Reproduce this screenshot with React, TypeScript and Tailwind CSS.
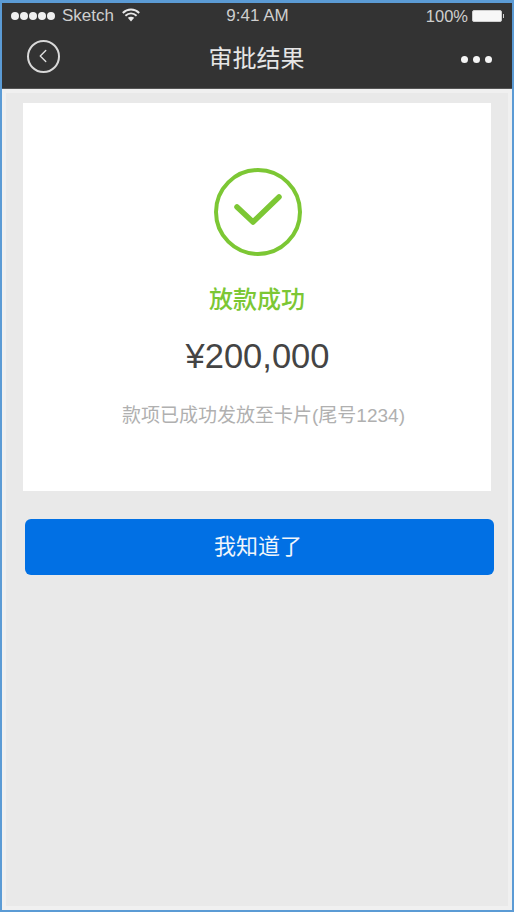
import { ChevronLeft } from "lucide-react";

const font = { sans: "font-['Liberation_Sans','Noto_Sans_CJK_SC',sans-serif]" };

function StatusBar() {
  return (
    <div className="flex h-[26px] items-center justify-between pl-[9px] pr-[8px] text-[17px] text-[#cfcfcf]">
      <div className="flex w-[170px] items-center">
        <div className="flex gap-[1px]">
          {[0, 1, 2, 3, 4].map((i) => (
            <span key={i} className="h-[8px] w-[8px] rounded-full bg-[#efefef]" />
          ))}
        </div>
        <span className="ml-[7px]">Sketch</span>
        <svg className="mb-[2px] ml-[8px]" width="18" height="14" viewBox="0 0 18 14" fill="none">
          <path d="M.8 5C5.5 .4 12.5 .4 17.2 5" stroke="#e8e8e8" strokeWidth="1.9" />
          <path d="M3.4 7.7C6.8 4.6 11.2 4.6 14.6 7.7" stroke="#e8e8e8" strokeWidth="1.9" />
          <path d="M5.8 9.8C7.6 8.4 10.4 8.4 12.2 9.8L9 13.5Z" fill="#e8e8e8" />
        </svg>
      </div>
      <span>9:41 AM</span>
      <div className="flex w-[170px] items-center justify-end">
        <span className="text-[16.5px]">100%</span>
        <div className="ml-[4px] h-[12px] w-[30px] rounded-[2px] border border-[#cfcfcf] bg-[#f7f7f7]" />
        <div className="ml-[1px] h-[4px] w-[1px] bg-[#cfcfcf]" />
      </div>
    </div>
  );
}

function NavBar() {
  return (
    <div className="flex h-[60px] items-center justify-between pb-[6px] pl-[25px] pr-[20px]">
      <div className="flex h-[33px] w-[33px] items-center justify-center rounded-full border-2 border-[#d9d9d9]">
        <ChevronLeft size={22} strokeWidth={1.5} className="mr-[2px] text-[#e0e0e0]" />
      </div>
      <div className="mr-[8px] mt-[6px] text-[24px] leading-[32px] text-[#e6e6e6]">审批结果</div>
      <div className="mt-[6px] flex gap-[5px]">
        {[0, 1, 2].map((i) => (
          <span key={i} className="h-[7px] w-[7px] rounded-full bg-[#f5f5f5]" />
        ))}
      </div>
    </div>
  );
}

function SuccessIcon() {
  return (
    <svg width="88" height="88" viewBox="0 0 88 88" fill="none">
      <circle cx="44" cy="44" r="42" stroke="#7cc734" strokeWidth="4" />
      <path d="M23 39L39 54L65 29" stroke="#7cc734" strokeWidth="5.5" strokeLinecap="round" strokeLinejoin="round" />
    </svg>
  );
}

export default function App() {
  return (
    <div className={`flex h-[912px] w-[514px] flex-col overflow-hidden border-x-2 border-b-2 border-t-[3px] border-[#5b9bd5] bg-[#e9e9e9] ${font.sans}`}>
      <div className="h-[86px] shrink-0 border-b border-[#555] bg-[#333333]">
        <StatusBar />
        <NavBar />
      </div>

      <div className="flex flex-1 flex-col border-[4px] border-[#f0f0f0] pl-[17px] pr-[15px] pt-[10px]">
        <div className="flex h-[388px] w-[468px] flex-col items-center bg-white pt-[65px]">
          <div className="ml-[1px]">
            <SuccessIcon />
          </div>
          <div className="mt-[29px] text-[24px] font-medium leading-[30px] text-[#7cc734]">放款成功</div>
          <div className="ml-[1px] mt-[21px] text-[34.5px] leading-[40px] text-[#444444]">¥200,000</div>
          <div className="ml-[13px] mt-[28px] text-[19px] leading-[24px] text-[#b0b0b0]">款项已成功发放至卡片(尾号1234)</div>
        </div>
        <button className="ml-[2px] mt-[28px] h-[56px] w-[469px] rounded-[6px] bg-[#0170e4] pb-[2px] pr-[3px] text-[22px] text-[#f0f5fb]">
          我知道了
        </button>
      </div>
    </div>
  );
}
